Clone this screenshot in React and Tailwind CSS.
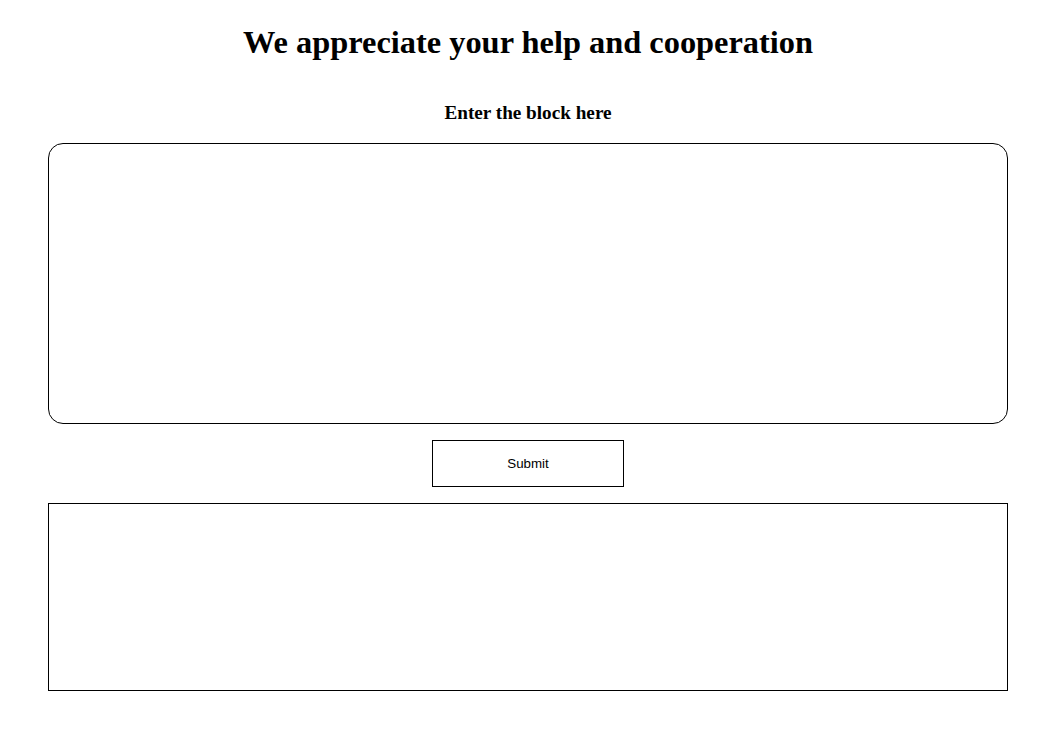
import React, { useState } from 'react';

export default function App() {
  const [block, setBlock] = useState('');
  const [result, setResult] = useState('');

  const handleSubmit = () => {
    setResult(block);
  };

  return (
    <div className="w-[1060px] min-h-[737px] bg-white text-black">
      <div className="w-[960px] ml-[48px] flex flex-col items-center">
        <h1
          className="mt-[24px] h-[37px] leading-[37px] text-[32.4px] font-bold text-center"
          style={{ fontFamily: '"Liberation Serif", serif' }}
        >
          We appreciate your help and cooperation
        </h1>
        <h3
          className="mt-[41px] h-[22px] leading-[22px] text-[19.2px] font-bold text-center"
          style={{ fontFamily: '"Liberation Serif", serif' }}
        >
          Enter the block here
        </h3>
        <textarea
          value={block}
          onChange={e => setBlock(e.target.value)}
          className="mt-[19px] w-[960px] h-[281px] border border-black rounded-[15px] resize-none outline-none p-3"
        />
        <button
          onClick={handleSubmit}
          className="mt-[16px] w-[192px] h-[47px] border border-black bg-white text-[13.33px] text-black"
          style={{ fontFamily: '"Liberation Sans", Arial, sans-serif' }}
        >
          Submit
        </button>
        <div className="mt-[16px] w-[960px] h-[188px] border border-black">
          {result}
        </div>
      </div>
    </div>
  );
}
